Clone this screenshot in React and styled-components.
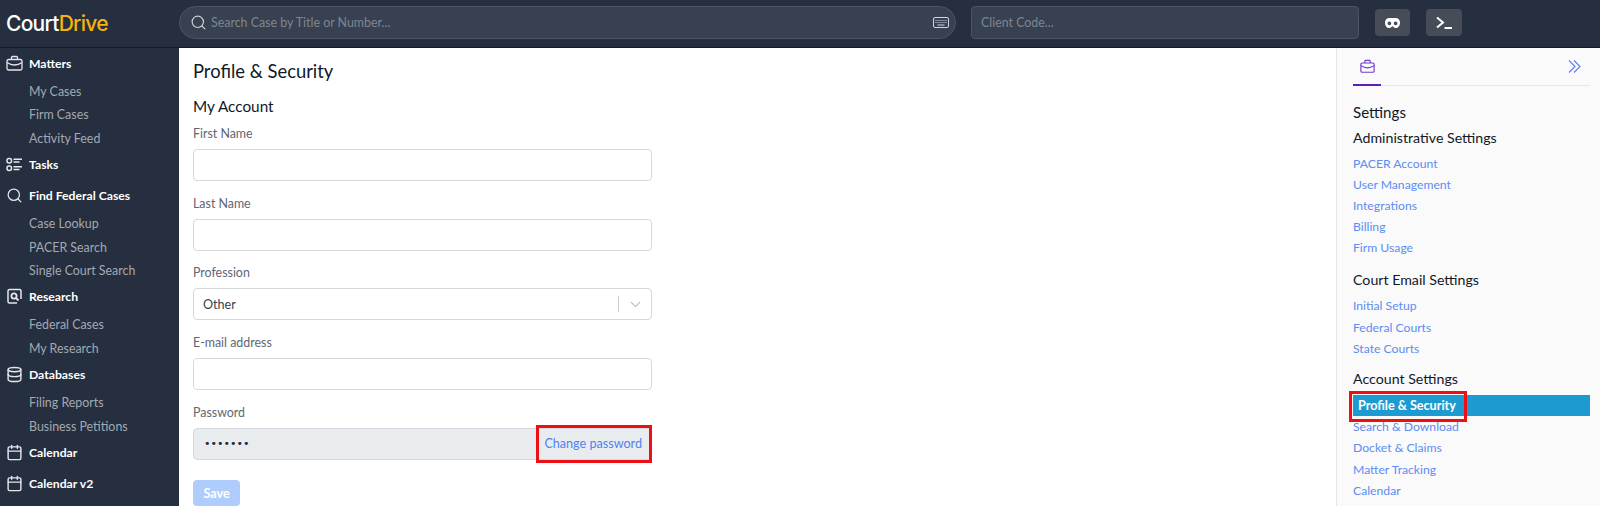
import React from "react";
import styled, { createGlobalStyle } from "styled-components";
import { Search, Database, Calendar, ChevronDown } from "lucide-react";

const Global = createGlobalStyle`
  html, body { margin: 0; padding: 0; height: 506px; overflow: hidden; background: #252f3f; }
  body { font-family: "Lato", "Noto Sans", sans-serif; }
  * { box-sizing: border-box; }
`;
const Page = styled.div`width: 1600px; height: 506px; overflow: hidden; display: flex; flex-direction: column; background: #252f3f;`;
const Header = styled.header`height: 48px; flex: none; display: flex; align-items: center; background: #252f3f; border-bottom: 1px solid #161c27;`;
const Logo = styled.div`width: 179px; flex: none; padding-left: 6px; font-family: "Inter", sans-serif; font-size: 21px; letter-spacing: -0.75px; font-weight: 500; color: #fff; line-height: 40px;
  span { color: #f5b30b; }`;
const SearchBar = styled.div`width: 777px; height: 33px; margin-bottom: 2px; border: 1px solid #4b5563; border-radius: 17px; background: #374151; display: flex; align-items: center; padding: 0 6px 0 10px; gap: 4px; color: #d1d5db;`;
const Placeholder = styled.span`flex: 1; font-size: 12.4px; color: #80868f;`;
const ClientBox = styled.div`width: 388px; height: 33px; margin: 0 0 2px 15px; border: 1px solid #4b5563; border-radius: 4px; background: #374151; display: flex; align-items: center; padding-left: 9px;`;
const IconBtn = styled.div`width: ${p => p.$w}px; height: 27px; margin: 0 0 2px ${p => p.$ml}px; border-radius: 4px; background: #464d58; display: flex; align-items: center; justify-content: center; color: #fff;`;
const Body = styled.div`flex: 1; display: flex; min-height: 0;`;
const Sidebar = styled.nav`width: 179px; flex: none; overflow: hidden;`;
const Head = styled.div`height: 31px; display: flex; align-items: center; padding-left: 6px; gap: 6px; color: #fff; font-size: 12.2px; font-weight: 700;
  svg { flex: none; width: 17px; height: 17px; color: #e5e7eb; }`;
const Child = styled.div`height: 23.4px; line-height: 23.4px; padding: 1px 0 0 29px; font-size: 12.4px; color: #a4a9b2;`;
const Main = styled.main`flex: 1; min-width: 0; background: #fff; display: flex; position: relative;`;
const Content = styled.div`flex: 1; padding: 10px 14px 0; color: #111827;`;
const Title = styled.h1`margin: 0; font-size: 18.4px; line-height: 26px; font-weight: 400; color: #111827;`;
const Sub = styled.h2`margin: 11px 0 0; font-size: 15.3px; line-height: 22px; font-weight: 400; color: #111827;`;
const Form = styled.div`width: 459px; margin-top: 8px; display: flex; flex-direction: column;`;
const Field = styled.div`height: 69.7px;`;
const Label = styled.div`font-size: 12.4px; line-height: 18px; color: #5f6672; margin-bottom: 6px;`;
const Input = styled.div`height: 32px; border: 1px solid #d5d8dd; border-radius: 4px; background: ${p => p.$off ? "#e9ecef" : "#fff"}; display: flex; align-items: center; padding-left: 9px; font-size: 12.6px; color: #374151;`;
const Spacer = styled.span`flex: 1;`;
const SelectSep = styled.span`width: 1px; height: 16px; background: #ccc;`;
const Chevron = styled.span`width: 32px; display: flex; justify-content: center; color: #b9b9b9;`;
const Dots = styled.span`font-size: 11px; letter-spacing: 0; color: #1f2937; font-family: "DejaVu Sans", sans-serif; padding-left: 1px;`;
const ChangeLink = styled.span`color: #4d83f0; font-size: 12.6px; padding-right: 9px;`;
const Highlight = styled.div`position: absolute; border: 3px solid #ee0f14; left: ${p => p.$l}px; top: ${p => p.$t}px; width: ${p => p.$w}px; height: ${p => p.$h}px; pointer-events: none;`;
const Save = styled.button`margin-top: 7px; width: 47px; height: 26px; border: 0; border-radius: 4px; background: #aecdfd; color: #fff; font: 700 12.6px "Lato", sans-serif; padding: 0;`;
const Panel = styled.aside`width: 264px; flex: none; background: #fafafa; border-left: 1px solid #e4e5e7; padding: 0 10px 0 16px; color: #111827;`;
const Tabs = styled.div`height: 38px; border-bottom: 1px solid #e5e7eb; display: flex; justify-content: space-between;`;
const Tab = styled.div`width: 28px; height: 38px; border-bottom: 2px solid #5b21b6; display: flex; align-items: center; justify-content: center; color: #6d3fc4;`;
const Collapse = styled.div`display: flex; align-items: center; padding-right: 7px; color: #5f83f2;`;
const PanelTitle = styled.div`margin-top: 15px; font-size: 15.1px; line-height: 22px; color: #111827;`;
const GroupTitle = styled.div`font-size: 14.2px; line-height: 20px; color: #111827; margin: ${p => p.$mt}px 0 ${p => p.$mb}px;`;
const PLink = styled.div`height: 21.2px; line-height: 21.2px; font-size: 12.2px; color: #5c8df2;`;
const Active = styled(PLink)`background: #1d9bd1; color: #fff; font-weight: 700; font-size: 12.6px; padding-left: 5px;`;

const Mask = () => (
  <svg width="15" height="12" viewBox="0 0 24 18" fill="#fff"><path fillRule="evenodd" d="M7 1h10c4 0 7 3 7 7 0 5-3 9-7 9-3 0-3.500-3-5-3s-2 3-5 3c-4 0-7-4-7-9 0-4 3-7 7-7zm0 5.500a3 3 0 1 0 0 6 3 3 0 0 0 0-6zm10 0a3 3 0 1 0 0 6 3 3 0 0 0 0-6z"/></svg>
);
const Prompt = () => (
  <svg width="18" height="14" viewBox="0 0 18 14" fill="none" stroke="#fff" strokeWidth="2"><path d="M2 1.500 8 6.500 2 11.500" /><path d="M9.500 12h7.500" /></svg>
);
const Case = ({ size = 17 }) => (
  <svg width={size} height={size} viewBox="0 0 17 17" fill="none" stroke="currentColor" strokeWidth="1.3">
    <rect x="1" y="4.500" width="15" height="10.500" rx="1.500" />
    <path d="M5.500 4.500V2.500a1 1 0 0 1 1-1h4a1 1 0 0 1 1 1v2" />
    <path d="M1 7.500c3 2 5 2.500 7.500 2.500s4.500-.5 7.500-2.500" />
  </svg>
);
const Checks = () => (
  <svg viewBox="0 0 17 17" fill="none" stroke="currentColor" strokeWidth="1.5">
    <rect x="1" y="2.500" width="4.500" height="4.500" rx="2" />
    <path d="M7.500 3.300h8.500M7.500 6h6" />
    <rect x="1" y="10" width="4.500" height="4.500" rx="2" />
    <path d="M7.500 10.800h8.500M7.500 13.500h6" />
  </svg>
);
const ResearchIcon = () => (
  <svg viewBox="0 0 17 17" fill="none" stroke="currentColor" strokeWidth="1.5">
    <path d="M15 11V3a1.500 1.500 0 0 0-1.500-1.500h-10A1.500 1.500 0 0 0 2 3v10.500A1.500 1.500 0 0 0 3.500 15H11" />
    <circle cx="8" cy="8" r="2.600" strokeWidth="1.800" />
    <path d="M10 10l2.500 2.500" strokeWidth="1.800" />
  </svg>
);
const Keys = () => (
  <svg width="16" height="11" viewBox="0 0 16 11" fill="none" stroke="#d1d5db"><rect x=".5" y=".5" width="15" height="10" rx="1.500" /><path d="M2.500 3.500h11M2.500 5.500h11" strokeDasharray="1 1" /><path d="M4.500 8h7" /></svg>
);
const Double = () => (
  <svg width="17" height="17" viewBox="0 0 17 17" fill="none" stroke="currentColor" strokeWidth="1.200"><path d="M3 2.500 9 8.500 3 14.500" /><path d="M8 2.500 14 8.500 8 14.500" /></svg>
);
const LucideSearch = () => <Search strokeWidth={1.8} />;
const LucideDb = () => <Database strokeWidth={2} />;
const LucideCal = () => <Calendar strokeWidth={2} />;

const nav = [
  [Case, "Matters", ["My Cases", "Firm Cases", "Activity Feed"]],
  [Checks, "Tasks", []],
  [LucideSearch, "Find Federal Cases", ["Case Lookup", "PACER Search", "Single Court Search"]],
  [ResearchIcon, "Research", ["Federal Cases", "My Research"]],
  [LucideDb, "Databases", ["Filing Reports", "Business Petitions"]],
  [LucideCal, "Calendar", []],
  [LucideCal, "Calendar v2", []],
];

export default function App() {
  return (
    <Page>
      <Global />
      <Header>
        <Logo>Court<span>Drive</span></Logo>
        <SearchBar>
          <Search size={17} strokeWidth={1.6} />
          <Placeholder>Search Case by Title or Number...</Placeholder>
          <Keys />
        </SearchBar>
        <ClientBox><Placeholder>Client Code...</Placeholder></ClientBox>
        <IconBtn $w={35} $ml={16}><Mask /></IconBtn>
        <IconBtn $w={36} $ml={16}><Prompt /></IconBtn>
      </Header>
      <Body>
        <Sidebar>
          {nav.map(([Ico, name, kids]) => (
            <React.Fragment key={name}>
              <Head><Ico />{name}</Head>
              {kids.map(k => <Child key={k}>{k}</Child>)}
            </React.Fragment>
          ))}
        </Sidebar>
        <Main>
          <Content>
            <Title>Profile &amp; Security</Title>
            <Sub>My Account</Sub>
            <Form>
              <Field><Label>First Name</Label><Input /></Field>
              <Field><Label>Last Name</Label><Input /></Field>
              <Field><Label>Profession</Label><Input>Other<Spacer /><SelectSep /><Chevron><ChevronDown size={17} strokeWidth={1.5} /></Chevron></Input></Field>
              <Field><Label>E-mail address</Label><Input /></Field>
              <Field><Label>Password</Label><Input $off><Dots>•••••••</Dots><Spacer /><ChangeLink>Change password</ChangeLink></Input></Field>
              <Save>Save</Save>
            </Form>
          </Content>
          <Highlight $l={357} $t={377} $w={116} $h={38} />
          <Highlight $l={1170} $t={343} $w={118} $h={31} />
          <Panel>
            <Tabs>
              <Tab><Case size={15} /></Tab>
              <Collapse><Double /></Collapse>
            </Tabs>
            <PanelTitle>Settings</PanelTitle>
            <GroupTitle $mt={5} $mb={4.5}>Administrative Settings</GroupTitle>
            {["PACER Account", "User Management", "Integrations", "Billing", "Firm Usage"].map(t => <PLink key={t}>{t}</PLink>)}
            <GroupTitle $mt={12} $mb={5}>Court Email Settings</GroupTitle>
            {["Initial Setup", "Federal Courts", "State Courts"].map(t => <PLink key={t}>{t}</PLink>)}
            <GroupTitle $mt={10} $mb={6}>Account Settings</GroupTitle>
            <Active>Profile &amp; Security</Active>
            {["Search & Download", "Docket & Claims", "Matter Tracking", "Calendar"].map(t => <PLink key={t}>{t}</PLink>)}
          </Panel>
        </Main>
      </Body>
    </Page>
  );
}
